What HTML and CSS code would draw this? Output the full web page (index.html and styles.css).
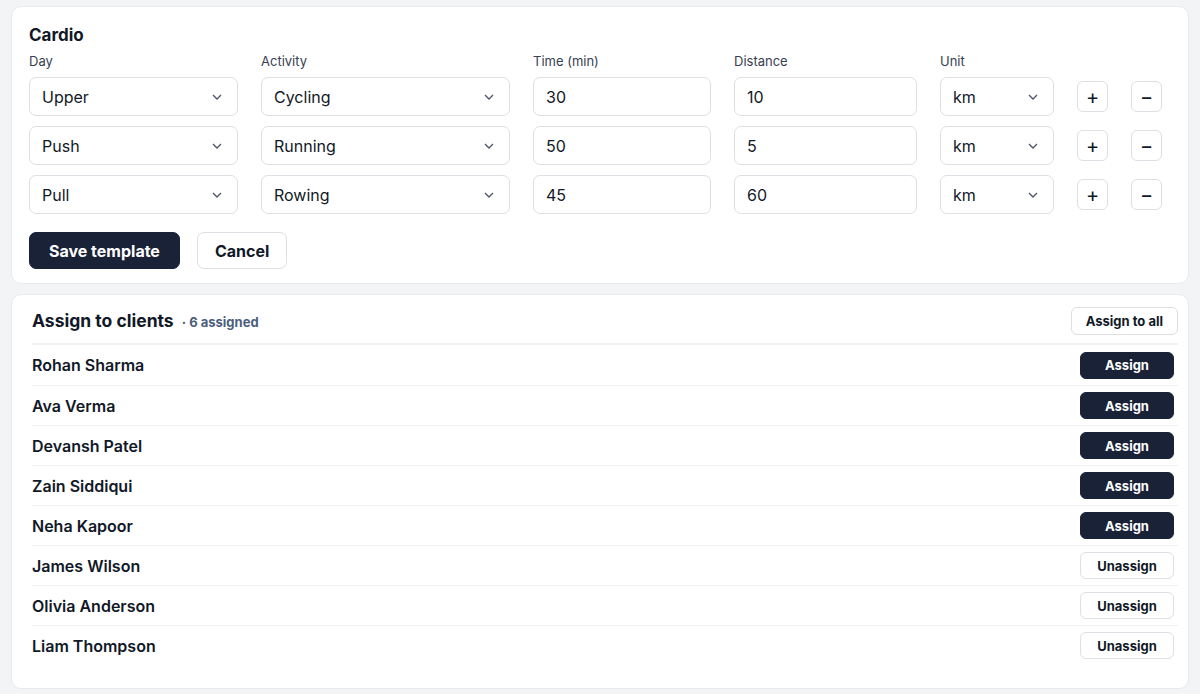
FILE: index.html
```html
<!DOCTYPE html>
<html lang="en">
<head>
    <meta charset="UTF-8">
    <meta name="viewport" content="width=device-width, initial-scale=1.0">
    <title>Cardio Template</title>
    <link rel="stylesheet" href="styles.css">
</head>
<body>
    <section class="card template">
        <h2 class="card-title">Cardio</h2>
        <div class="grid">
            <span class="label">Day</span>
            <span class="label">Activity</span>
            <span class="label">Time (min)</span>
            <span class="label">Distance</span>
            <span class="label">Unit</span>
            <span></span>
            <span></span>

            <div class="field select">Upper<svg viewBox="0 0 10 6"><path d="M1 1l4 4 4-4"/></svg></div>
            <div class="field select">Cycling<svg viewBox="0 0 10 6"><path d="M1 1l4 4 4-4"/></svg></div>
            <div class="field">30</div>
            <div class="field">10</div>
            <div class="field select">km<svg viewBox="0 0 10 6"><path d="M1 1l4 4 4-4"/></svg></div>
            <button class="icon-btn">+</button>
            <button class="icon-btn">&minus;</button>

            <div class="field select">Push<svg viewBox="0 0 10 6"><path d="M1 1l4 4 4-4"/></svg></div>
            <div class="field select">Running<svg viewBox="0 0 10 6"><path d="M1 1l4 4 4-4"/></svg></div>
            <div class="field">50</div>
            <div class="field">5</div>
            <div class="field select">km<svg viewBox="0 0 10 6"><path d="M1 1l4 4 4-4"/></svg></div>
            <button class="icon-btn">+</button>
            <button class="icon-btn">&minus;</button>

            <div class="field select">Pull<svg viewBox="0 0 10 6"><path d="M1 1l4 4 4-4"/></svg></div>
            <div class="field select">Rowing<svg viewBox="0 0 10 6"><path d="M1 1l4 4 4-4"/></svg></div>
            <div class="field">45</div>
            <div class="field">60</div>
            <div class="field select">km<svg viewBox="0 0 10 6"><path d="M1 1l4 4 4-4"/></svg></div>
            <button class="icon-btn">+</button>
            <button class="icon-btn">&minus;</button>
        </div>
        <div class="actions">
            <button class="btn primary">Save template</button>
            <button class="btn">Cancel</button>
        </div>
    </section>

    <section class="card clients">
        <div class="clients-head">
            <h2 class="card-title">Assign to clients <span class="count">&middot; 6 assigned</span></h2>
            <button class="btn small">Assign to all</button>
        </div>
        <ul class="client-list">
            <li><span>Rohan Sharma</span><button class="btn small primary">Assign</button></li>
            <li><span>Ava Verma</span><button class="btn small primary">Assign</button></li>
            <li><span>Devansh Patel</span><button class="btn small primary">Assign</button></li>
            <li><span>Zain Siddiqui</span><button class="btn small primary">Assign</button></li>
            <li><span>Neha Kapoor</span><button class="btn small primary">Assign</button></li>
            <li><span>James Wilson</span><button class="btn small">Unassign</button></li>
            <li><span>Olivia Anderson</span><button class="btn small">Unassign</button></li>
            <li><span>Liam Thompson</span><button class="btn small">Unassign</button></li>
        </ul>
    </section>
</body>
</html>
```

FILE: styles.css
```css
body {
    font-family: Inter, "Noto Sans", sans-serif;
    color: #111827;
    background-color: #f3f4f6;
    margin: 0;
    padding: 6px 11px;
}
.card {
    background-color: #fff;
    border: 1px solid #e8eaee;
    border-radius: 10px;
}
.template {
    padding: 16px 17px 14px;
}
.card-title {
    font-size: 17px;
    font-weight: 700;
    margin: 0;
    line-height: 24px;
}
.grid {
    display: grid;
    grid-template-columns: 209px 249px 178px 183px 114px 31px 31px;
    column-gap: 23px;
    row-gap: 10px;
    align-items: center;
    margin-top: 6px;
}
.label {
    font-size: 13px;
    color: #374151;
    line-height: 16px;
    margin-bottom: -2px;
}
.field {
    height: 39px;
    box-sizing: border-box;
    border: 1px solid #dcdfe4;
    border-radius: 7px;
    padding: 0 13px 0 12px;
    display: flex;
    align-items: center;
    justify-content: space-between;
    font-size: 16px;
}
.field svg {
    width: 10px;
    height: 6px;
    fill: none;
    stroke: #4b5563;
    stroke-width: 1.3;
    margin-right: 2px;
}
.icon-btn {
    width: 31px;
    height: 31px;
    padding: 0;
    border: 1px solid #dcdfe4;
    border-radius: 6px;
    background-color: #fff;
    font-family: inherit;
    font-size: 20px;
    color: #111827;
    line-height: 1;
}
.actions {
    display: flex;
    gap: 17px;
    margin-top: 18px;
}
.btn {
    font-family: inherit;
    font-size: 16px;
    font-weight: 700;
    color: #111827;
    background-color: #fff;
    border: 1px solid #dcdfe4;
    border-radius: 7px;
    height: 37px;
    padding: 0 18px;
}
.btn.primary {
    background-color: #1a2238;
    border-color: #1a2238;
    color: #fff;
}
.template .btn.primary {
    padding: 0 19px;
}
.template .btn:not(.primary) {
    padding: 0 17px;
}
.clients {
    margin-top: 10px;
    padding: 12px 10px 23px 20px;
}
.clients-head {
    display: flex;
    justify-content: space-between;
    align-items: center;
    padding-bottom: 8px;
    border-bottom: 2px solid #eef0f3;
}
.clients-head .card-title {
    font-size: 17.5px;
}
.count {
    font-size: 13px;
    color: #4b5f7c;
    margin-left: 4px;
}
.btn.small {
    height: 28px;
    font-size: 13px;
    padding: 0 14px;
    border-radius: 6px;
}
.client-list {
    list-style: none;
    margin: 0;
    padding: 0;
}
.client-list li {
    display: flex;
    justify-content: space-between;
    align-items: center;
    box-sizing: border-box;
    height: 40px;
    border-top: 1px solid #eef0f3;
    padding-right: 4px;
    font-size: 16px;
    font-weight: 600;
}
.client-list li:first-child {
    border-top: none;
}
.client-list .btn.small {
    width: 94px;
    height: 27px;
    padding: 0;
}
```
